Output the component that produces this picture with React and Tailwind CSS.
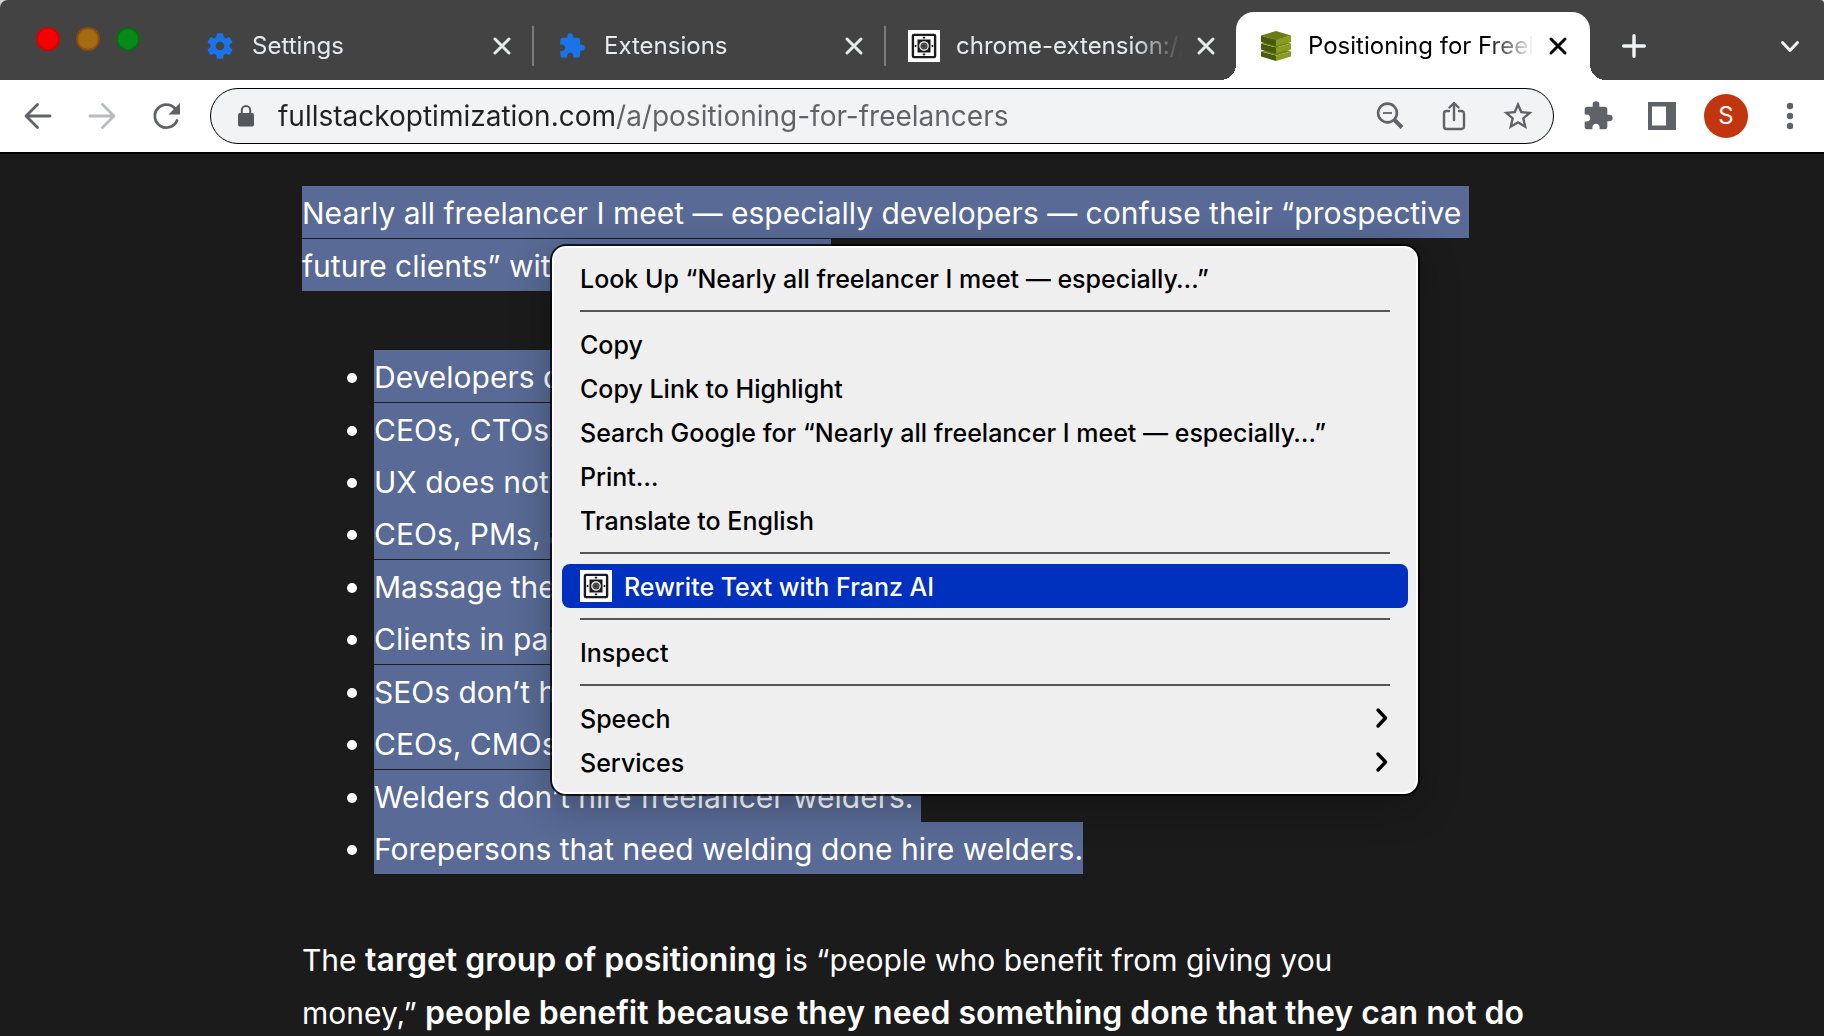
import React from "react";

function GearIcon() {
  return (
    <svg viewBox="0 0 24 24" className="size-8 shrink-0" fill="#1a73e8" aria-hidden="true">
      <path d="M19.14 12.94c.04-.3.06-.61.06-.94 0-.32-.02-.64-.07-.94l2.03-1.58a.49.49 0 0 0 .12-.61l-1.92-3.32a.49.49 0 0 0-.59-.22l-2.39.96a7 7 0 0 0-1.62-.94l-.36-2.54A.48.48 0 0 0 13.92 2.4h-3.84a.48.48 0 0 0-.48.41l-.36 2.54c-.59.24-1.13.57-1.62.94l-2.39-.96a.48.48 0 0 0-.59.22L2.72 8.87a.48.48 0 0 0 .12.61l2.03 1.58c-.05.3-.07.63-.07.94s.02.64.07.94l-2.03 1.58a.49.49 0 0 0-.12.61l1.92 3.32c.12.22.37.29.59.22l2.39-.96c.5.38 1.03.7 1.62.94l.36 2.54c.05.24.25.41.48.41h3.84c.24 0 .44-.17.48-.41l.36-2.54a6.6 6.6 0 0 0 1.62-.94l2.39.96c.22.08.47 0 .59-.22l1.92-3.32a.48.48 0 0 0-.12-.61zM12 15.2a3.2 3.2 0 1 1 0-6.4 3.2 3.2 0 0 1 0 6.4z" />
    </svg>
  );
}

function PuzzleIcon({ className }) {
  return (
    <svg viewBox="0 0 24 24" className={className} fill="currentColor" aria-hidden="true">
      <path d="M20.5 11H19V7c0-1.1-.9-2-2-2h-4V3.5a2.5 2.5 0 0 0-5 0V5H4c-1.1 0-1.99.9-1.99 2v3.8H3.5c1.49 0 2.7 1.21 2.7 2.7s-1.21 2.7-2.7 2.7H2V20c0 1.1.9 2 2 2h3.8v-1.5c0-1.49 1.21-2.7 2.7-2.7s2.7 1.21 2.7 2.7V22H17c1.1 0 2-.9 2-2v-4h1.5a2.5 2.5 0 0 0 0-5z" />
    </svg>
  );
}

function FranzIcon() {
  return (
    <svg viewBox="0 0 32 32" className="size-8 shrink-0" aria-hidden="true">
      <rect width="32" height="32" fill="#fff" />
      <rect x="4.9" y="4.9" width="22.2" height="22.2" rx="1" fill="#fff" stroke="#1b1b1b" strokeWidth="2.4" />
      <rect x="9.5" y="9.5" width="13" height="13" fill="#1b1b1b" />
      <circle cx="16" cy="16" r="4.2" fill="#333" stroke="#fff" strokeWidth="1.2" />
      <circle cx="16" cy="16" r="2.2" fill="none" stroke="#777" strokeWidth="0.8" />
      <path d="M14.8 6.8h2.4v1.6h-2.4zM14.8 23.6h2.4v1.6h-2.4zM6.8 15h1.6v2H6.8zM23.6 15h1.6v2h-1.6z" fill="#1b1b1b" />
    </svg>
  );
}

function StackIcon() {
  return (
    <svg viewBox="0 0 32 32" className="size-8 shrink-0" aria-hidden="true">
      <path d="M1 21.5 16 25.5V31L1 26.5z" fill="#4a5a0c" />
      <path d="M31 21.5 16 25.5V31l15-4.5z" fill="#8a9c1e" />
      <path d="M1 21.2 16 17l15 4.2-15 4.3z" fill="#6f8018" />
      <path d="M1 13.5 16 17.5V23.5L1 19.5z" fill="#4a5a0c" />
      <path d="M31 13.5 16 17.5V23.5l15-4z" fill="#8a9c1e" />
      <path d="M1 13.2 16 9l15 4.2-15 4.3z" fill="#6f8018" />
      <path d="M1 5.5 16 9.8V16L1 12z" fill="#4a5a0c" />
      <path d="M31 5.5 16 9.8V16l15-4z" fill="#8a9c1e" />
      <path d="M1 5.4 16 1l15 4.4L16 9.9z" fill="#6a7b18" />
    </svg>
  );
}

function Tab({ icon, title, active, divider }) {
  return (
    <div
      className={
        active
          ? "relative -ml-0.5 flex h-full min-w-0 max-w-[354px] flex-1 items-center rounded-t-[18px] bg-white pr-5 pl-6 text-black before:absolute before:bottom-0 before:-left-4 before:size-4 before:bg-[radial-gradient(circle_at_0_0,transparent_16px,white_16px)] after:absolute after:-right-4 after:bottom-0 after:size-4 after:bg-[radial-gradient(circle_at_100%_0,transparent_16px,white_16px)]"
          : "flex h-full min-w-0 max-w-[352px] flex-1 items-center pl-[22px] text-[#e8eaed]"
      }
    >
      {icon}
      <span className="ml-4 min-w-0 flex-1 overflow-hidden text-2xl leading-8 whitespace-nowrap [mask-image:linear-gradient(to_right,black_calc(100%-48px),transparent)]">
        {title}
      </span>
      <button aria-label={"Close " + title} className={active ? "ml-3 shrink-0" : "mr-[18px] ml-3 shrink-0"}>
        <svg viewBox="0 0 24 24" className="size-6" stroke="currentColor" strokeWidth="3" strokeLinecap="round" aria-hidden="true">
          <path d="M5 5l14 14M19 5 5 19" />
        </svg>
      </button>
      {!active && <span className={divider ? "h-10 w-0.5 shrink-0 bg-[#7c7c7c]" : "h-10 w-0.5 shrink-0"} />}
    </div>
  );
}

function TabStrip() {
  return (
    <header className="flex h-20 rounded-tl-lg rounded-tr-sm bg-[#434343] pt-3">
      <div className="flex w-[182px] shrink-0 gap-4 pt-[15px] pl-9">
        <button aria-label="Close window" className="size-6 rounded-full border-2 border-[#d50000] bg-[#f40000]" />
        <button aria-label="Minimize window" className="size-6 rounded-full border-2 border-[#8a4d0c] bg-[#a56a12]" />
        <button aria-label="Zoom window" className="size-6 rounded-full border-2 border-[#0a6a18] bg-[#058a18]" />
      </div>
      <nav className="flex min-w-0 flex-1" aria-label="Tabs">
        <Tab icon={<GearIcon />} title="Settings" divider />
        <Tab icon={<PuzzleIcon className="size-8 shrink-0 p-0.5 text-[#1a73e8]" />} title="Extensions" divider />
        <Tab icon={<FranzIcon />} title="chrome-extension://" />
        <Tab icon={<StackIcon />} title="Positioning for Freelancers" active />
        <button aria-label="New tab" className="ml-8 self-center text-[#f1f3f4]">
          <svg viewBox="0 0 24 24" className="size-6" stroke="currentColor" strokeWidth="3.4" strokeLinecap="round" aria-hidden="true">
            <path d="M12 1.7v20.6M1.7 12h20.6" />
          </svg>
        </button>
      </nav>
      <button aria-label="Search tabs" className="mr-[22px] ml-4 shrink-0 self-center text-[#f1f3f4]">
        <svg viewBox="0 0 24 24" className="size-6" fill="none" stroke="currentColor" strokeWidth="3" strokeLinecap="round" strokeLinejoin="round" aria-hidden="true">
          <path d="M4.5 8.5 12 16.5l7.5-8" />
        </svg>
      </button>
    </header>
  );
}

function Toolbar() {
  return (
    <div className="flex h-[74px] items-center border-b-2 border-black bg-white pr-[18px] pl-[22px] text-[#5f6368]">
      <div className="flex shrink-0 gap-8">
        <button aria-label="Back">
          <svg viewBox="0 0 32 32" className="size-8" fill="none" stroke="currentColor" strokeWidth="2.8" strokeLinecap="round" strokeLinejoin="round" aria-hidden="true">
            <path d="M28 16H4.5M15.5 4.5 4 16l11.5 11.5" />
          </svg>
        </button>
        <button aria-label="Forward" disabled className="text-[#b8babd]">
          <svg viewBox="0 0 32 32" className="size-8" fill="none" stroke="currentColor" strokeWidth="2.8" strokeLinecap="round" strokeLinejoin="round" aria-hidden="true">
            <path d="M4 16h23.5M16.5 4.5 28 16 16.5 27.5" />
          </svg>
        </button>
        <button aria-label="Reload">
          <svg viewBox="0 0 32 32" className="size-8" aria-hidden="true">
            <path d="M27 20.5A11.5 11.5 0 1 1 25 8.5" fill="none" stroke="currentColor" strokeWidth="2.8" strokeLinecap="round" />
            <path d="M30 3v11.500H18.500z" fill="currentColor" />
          </svg>
        </button>
      </div>
      <div className="ml-7 flex h-14 min-w-0 flex-1 items-center rounded-full border border-black bg-[#f1f3f4] pr-[19px]">
        <svg viewBox="0 0 16 22" className="ml-[27px] h-[22px] w-4 shrink-0" aria-hidden="true">
          <rect y="8" width="16" height="13.5" rx="1.8" fill="#54585c" />
          <path d="M3.8 9V5.3a4.2 4.2 0 0 1 8.4 0V9" fill="none" stroke="#54585c" strokeWidth="2" />
        </svg>
        <input
          aria-label="Address"
          defaultValue="fullstackoptimization.com/a/positioning-for-freelancers"
          className="ml-6 min-w-0 flex-1 bg-[linear-gradient(to_right,#202124_338px,#5f6368_338px)] bg-clip-text text-[28px] leading-9 text-transparent outline-none"
        />
        <div className="ml-4 flex shrink-0 gap-8">
          <button aria-label="Zoom out">
            <svg viewBox="0 0 32 32" className="size-8" fill="none" stroke="currentColor" aria-hidden="true">
              <circle cx="13.5" cy="13" r="9.4" strokeWidth="2.6" />
              <path d="M9 13h9" strokeWidth="1.8" />
              <path d="m20.5 20 7.5 7.5" strokeWidth="4" />
            </svg>
          </button>
          <button aria-label="Share">
            <svg viewBox="0 0 32 32" className="size-8" fill="none" stroke="currentColor" strokeWidth="2.4" strokeLinecap="round" strokeLinejoin="round" aria-hidden="true">
              <path d="M11 11H8.5A2.5 2.5 0 0 0 6 13.5v13A2.5 2.5 0 0 0 8.5 29h15a2.5 2.5 0 0 0 2.5-2.5v-13a2.5 2.5 0 0 0-2.5-2.5H21M16 20V3M11.5 7.5 16 3l4.5 4.5" />
            </svg>
          </button>
          <button aria-label="Bookmark this page">
            <svg viewBox="1 1 22 22" className="size-8" fill="currentColor" aria-hidden="true">
              <path d="m22 9.240-7.190-.62L12 2 9.190 8.630 2 9.240l5.460 4.730L5.820 21 12 17.270 18.180 21l-1.630-7.030zM12 15.400l-3.760 2.270 1-4.280-3.320-2.880 4.380-.38L12 6.100l1.710 4.040 4.380.38-3.320 2.880 1 4.280z" />
            </svg>
          </button>
        </div>
      </div>
      <div className="ml-7 flex shrink-0 items-center">
        <button aria-label="Extensions">
          <PuzzleIcon className="size-8" />
        </button>
        <button aria-label="Side panel" className="ml-8">
          <svg viewBox="0 0 32 32" className="size-8" aria-hidden="true">
            <path fillRule="evenodd" d="M2 2h28v28H2zM6 6.5v19h14v-19z" fill="currentColor" />
          </svg>
        </button>
        <button aria-label="Profile" className="ml-[26px] size-11 rounded-full bg-[#c1350f] text-2xl leading-8 text-white">
          S
        </button>
        <button aria-label="Menu" className="ml-[26px]">
          <svg viewBox="0 0 32 32" className="size-8" fill="currentColor" aria-hidden="true">
            <circle cx="16" cy="6" r="3.2" />
            <circle cx="16" cy="16" r="3.2" />
            <circle cx="16" cy="26" r="3.2" />
          </svg>
        </button>
      </div>
    </div>
  );
}

const points = [
  { text: "Developers don’t hire developers." },
  { text: "CEOs, CTOs, and PMs do.", gap: true },
  { text: "UX does not hire UX." },
  { text: "CEOs, PMs, and CTOs do." },
  { text: "Massage therapists don’t either.", gap: true },
  { text: "Clients in pain do." },
  { text: "SEOs don’t hire SEOs.", gap: true },
  { text: "CEOs, CMOs, and PMs do." },
  { text: "Welders don’t hire freelancer welders.", gap: true },
  { text: "Forepersons that need welding done hire welders.", last: true },
];

function Article() {
  return (
    <article className="mx-auto max-w-[1220px] text-[30px] leading-[50px] font-[425] text-white">
      <p className="flex flex-col items-start gap-px whitespace-nowrap">
        <span className="bg-[#586a95] pt-0.5 pr-2">Nearly all freelancer I meet — especially developers — confuse their “prospective</span>
        <span className="w-[529px] bg-[#586a95] pt-0.5">future clients” with their peers:</span>
      </p>
      <ul className="mt-[59px] pl-[72px]">
        {points.map((p) => (
          <li key={p.text} className={p.gap ? "mt-px flex items-center" : "flex items-center"}>
            <span className="mt-1 mr-[17px] -ml-[27px] size-2.5 rounded-full bg-white" />
            <span className={p.last ? "bg-[#586a95] pt-0.5 whitespace-nowrap" : "bg-[#586a95] pt-0.5 pr-2 whitespace-nowrap"}>{p.text}</span>
          </li>
        ))}
      </ul>
      <p className="mt-[59px] flex flex-col gap-px whitespace-nowrap">
        <span className="h-[52px] pt-0.5">
          The <strong className="text-[32px] font-semibold">target group of positioning</strong> is “people who benefit from giving you
        </span>
        <span className="h-[52px] pt-0.5">
          money,” <strong className="text-[32px] font-semibold">people benefit because they need something done that they can not do</strong>
        </span>
      </p>
    </article>
  );
}

function MenuItem({ children, submenu, active, icon }) {
  return (
    <button
      role="menuitem"
      className={
        active
          ? "flex h-11 w-full items-center rounded-lg bg-[#0030be] px-[18px] text-left text-white"
          : "flex h-11 w-full items-center px-[18px] text-left"
      }
    >
      {icon}
      <span className={icon ? "ml-3 flex-1 pt-0.5" : "flex-1 pt-0.5"}>{children}</span>
      {submenu && (
        <svg viewBox="0 0 16 24" className="h-6 w-4" fill="none" stroke="currentColor" strokeWidth="3.4" strokeLinecap="round" strokeLinejoin="round" aria-hidden="true">
          <path d="M4 4 11.5 12 4 20" />
        </svg>
      )}
    </button>
  );
}

function Separator() {
  return <hr className="mx-[18px] my-2.5 h-0.5 border-0 bg-[#555555]" />;
}

function ContextMenu() {
  return (
    <div
      role="menu"
      className="absolute top-[92px] left-[552px] w-[866px] rounded-[14px] border-2 border-white bg-[#efefef] p-2 text-[25px] leading-8 font-[450] whitespace-nowrap text-black shadow-[0_0_0_2px_rgba(0,0,0,0.8),0_10px_40px_rgba(0,0,0,0.3)]"
    >
      <MenuItem>Look Up “Nearly all freelancer I meet — especially…”</MenuItem>
      <Separator />
      <MenuItem>Copy</MenuItem>
      <MenuItem>Copy Link to Highlight</MenuItem>
      <MenuItem>Search Google for “Nearly all freelancer I meet — especially…”</MenuItem>
      <MenuItem>Print…</MenuItem>
      <MenuItem>Translate to English</MenuItem>
      <Separator />
      <MenuItem active icon={<FranzIcon />}>Rewrite Text with Franz AI</MenuItem>
      <Separator />
      <MenuItem>Inspect</MenuItem>
      <Separator />
      <MenuItem submenu>Speech</MenuItem>
      <MenuItem submenu>Services</MenuItem>
    </div>
  );
}

export default function App() {
  return (
    <div className="flex h-screen flex-col overflow-hidden bg-[#d4d4d4] font-['Inter',sans-serif]">
      <TabStrip />
      <Toolbar />
      <main className="relative flex-1 overflow-hidden bg-[#1b1b1b] pt-8">
        <Article />
        <ContextMenu />
      </main>
    </div>
  );
}
